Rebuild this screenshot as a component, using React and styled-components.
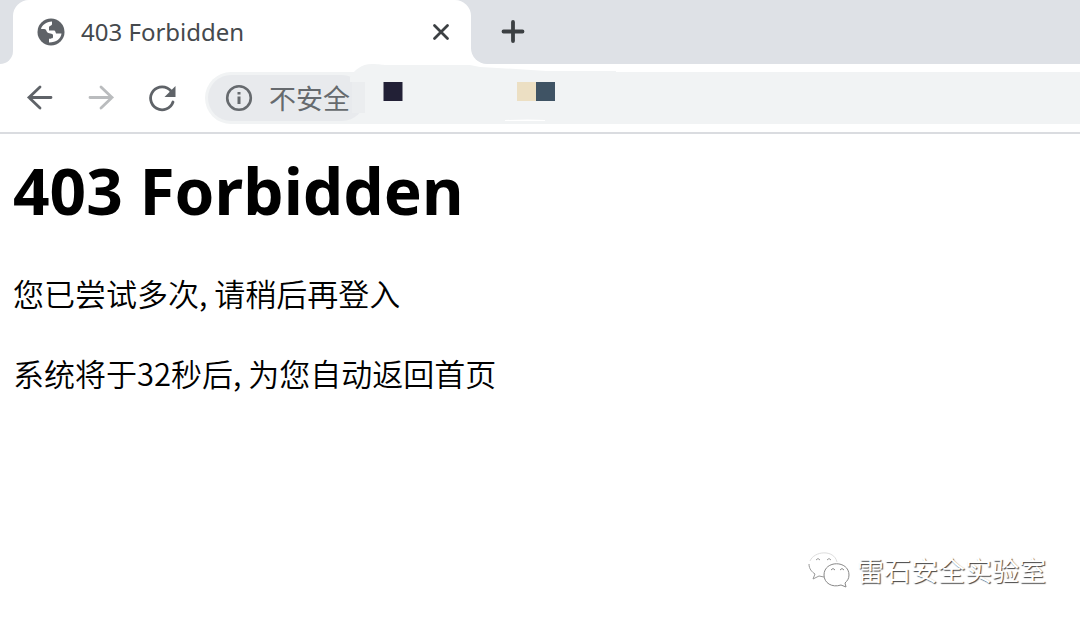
import React from "react";
import styled, { createGlobalStyle } from "styled-components";

const GlobalStyle = createGlobalStyle`
  * { box-sizing: border-box; }
  body {
    margin: 0;
    background: #fff;
    color: #000;
    font-family: "Noto Sans", "Noto Sans CJK SC", sans-serif;
  }
`;

const Page = styled.div`
  display: flex;
  flex-direction: column;
  min-height: 100vh;
  overflow: hidden;
`;

const TabStrip = styled.header`
  display: flex;
  align-items: stretch;
  height: 64px;
  background: #fff;
`;

const StripEdge = styled.div`
  width: 13px;
  background: #dee1e6;
  border-bottom-right-radius: 13px;
`;

const TabArea = styled.div`
  width: 458px;
  background: #dee1e6;
`;

const Tab = styled.div`
  display: flex;
  align-items: center;
  height: 100%;
  padding: 0 20px 0 24px;
  gap: 16px;
  background: #fff;
  border-radius: 16px 16px 0 0;
`;

const TabTitle = styled.span`
  flex: 1;
  font-size: 24px;
  line-height: 32px;
  color: #45494d;
`;

const StripRest = styled.div`
  display: flex;
  align-items: center;
  flex: 1;
  padding-left: 28px;
  background: #dee1e6;
  border-bottom-left-radius: 16px;
`;

const IconButton = styled.button`
  display: grid;
  place-items: center;
  width: ${(p) => p.$size}px;
  height: ${(p) => p.$size}px;
  padding: 0;
  border: 0;
  background: none;
  color: ${(p) => p.$color || "#5f6368"};
`;

const Icon = styled.svg`
  display: block;
  flex: none;
  fill: none;
  stroke: currentColor;
`;

const Toolbar = styled.nav`
  display: flex;
  align-items: center;
  height: 70px;
  padding-left: 24px;
  border-bottom: 2px solid #dadce0;
`;

const NavButtons = styled.div`
  display: flex;
  gap: 29px;
  margin-right: 27px;
`;

const AddressBar = styled.div`
  position: relative;
  display: flex;
  align-items: center;
  flex: 1;
  height: 52px;
  padding: 3px;
  background: #f1f3f4;
  border-radius: 26px 0 0 26px;
`;

const SecurityChip = styled.button`
  display: flex;
  align-items: center;
  gap: 16px;
  height: 46px;
  padding: 0 15px 0 17px;
  border: 0;
  border-radius: 23px;
  background: #e8eaed;
  color: #666a6e;
  font: 27px/36px "Noto Sans CJK SC", sans-serif;
`;

const Redaction = styled.svg`
  position: absolute;
  left: 145px;
  top: -8px;
`;

const Content = styled.main`
  padding: 13px;
`;

const Title = styled.h1`
  margin: 0 0 38px;
  font-size: 64px;
  line-height: 88px;
  font-weight: 700;
`;

const Message = styled.p`
  margin: 0 0 40px;
  font-family: "Noto Sans CJK SC", sans-serif;
  font-size: 31px;
  line-height: 40px;
  font-weight: 350;
`;

const Watermark = styled.footer`
  display: flex;
  align-items: center;
  gap: 7px;
  margin: auto 34px 28px auto;
  color: #fff;
  font: 27px/40px "Noto Sans CJK SC", sans-serif;
  text-shadow: 1px 1px 1px #444;
`;

export default function App() {
  return (
    <Page>
      <GlobalStyle />
      <TabStrip>
        <StripEdge />
        <TabArea>
          <Tab>
            <Icon width="28" height="28" viewBox="0 0 28 28" color="#5f6368">
              <circle cx="14" cy="14" r="13.500" fill="currentColor" stroke="none" />
              <path
                fill="#fff"
                stroke="none"
                d="M4 11C5 7 9 4 15 3.500V6c0 2-3 1.500-3 3.500v3h5c1.500 0 1.500 2 2 3h5.500c-.5 5-5 9-12.500 9V21c1-.5 4 0 4-2v-2c0-2-5-1-6-3s-1-3-3-3z"
              />
            </Icon>
            <TabTitle>403 Forbidden</TabTitle>
            <IconButton $size={20} $color="#3c4043" aria-label="Close tab">
              <Icon width="20" height="20" viewBox="0 0 20 20" strokeWidth="2.800" strokeLinecap="round">
                <path d="M3.500 3.500l13 13M16.500 3.500l-13 13" />
              </Icon>
            </IconButton>
          </Tab>
        </TabArea>
        <StripRest>
          <IconButton $size={28} $color="#3c4043" aria-label="New tab">
            <Icon width="28" height="28" viewBox="0 0 28 28" strokeWidth="3.800" strokeLinecap="round">
              <path d="M14 4v19M4.500 13.500h19" />
            </Icon>
          </IconButton>
        </StripRest>
      </TabStrip>
      <Toolbar>
        <NavButtons>
          <IconButton $size={32} aria-label="Back">
            <Icon width="32" height="32" viewBox="0 0 32 32" strokeWidth="2.800" strokeLinecap="round">
              <path d="M27 15.500H5M16 5L5 15.500 16 26" />
            </Icon>
          </IconButton>
          <IconButton $size={32} $color="#babcbe" aria-label="Forward">
            <Icon width="32" height="32" viewBox="0 0 32 32" strokeWidth="2.800" strokeLinecap="round">
              <path d="M5 15.500h22M16 5l11 10.500L16 26" />
            </Icon>
          </IconButton>
          <IconButton $size={32} aria-label="Reload">
            <Icon width="32" height="32" viewBox="0 0 32 32" strokeWidth="2.800" strokeLinecap="round">
              <path d="M27 20A11.500 11.500 0 1 1 25 9" />
              <path fill="currentColor" stroke="none" d="M29.500 4v11h-11z" />
            </Icon>
          </IconButton>
        </NavButtons>
        <AddressBar>
          <SecurityChip>
            <Icon width="28" height="28" viewBox="0 0 28 28" strokeWidth="2.600">
              <circle cx="14" cy="14" r="11.800" />
              <path strokeWidth="3" d="M14 12.500v7.500M14 8v2.500" />
            </Icon>
            不安全
          </SecurityChip>
          <Redaction width="420" height="60" viewBox="350 64 420 60" aria-hidden="true">
            <path fill="#ebedef" d="M352 82h13v31h-13z" />
            <path
              fill="#f1f3f4"
              d="M350 77c5-7 11-13 22-13 8 0 10 1 14 1h84l10 2 36 2 30 2h70v53H365V82h-15z"
            />
            <path fill="#fff" d="M505 120q25-1 40 0v1h-40z" />
            <path fill="#222036" d="M383.500 82h19v19h-19z" />
            <path fill="#ecdfc3" d="M517 82h19v19h-19z" />
            <path fill="#3f5364" d="M536 82h19v19h-19z" />
          </Redaction>
        </AddressBar>
      </Toolbar>
      <Content>
        <Title>403 Forbidden</Title>
        <Message>您已尝试多次, 请稍后再登入</Message>
        <Message>系统将于32秒后, 为您自动返回首页</Message>
      </Content>
      <Watermark>
        <Icon width="42" height="38" viewBox="0 0 42 38" aria-hidden="true">
          <path stroke="#ddd" d="M2 10C6 0 26-2 29 11" />
          <path stroke="#999" d="M1 13c0 5 3 8 6 10l-2 5 6-3 5 1M8 9q2-3 4 0M19 9q2-3 4 0" />
          <path
            stroke="#888"
            d="M38 36l-5-2c-9 3-17-2-17-10 0-15 25-15 25 0 0 4-2 6-4 8zM23 19q2-3 4 0M32 19q2-3 4 0"
          />
        </Icon>
        雷石安全实验室
      </Watermark>
    </Page>
  );
}
